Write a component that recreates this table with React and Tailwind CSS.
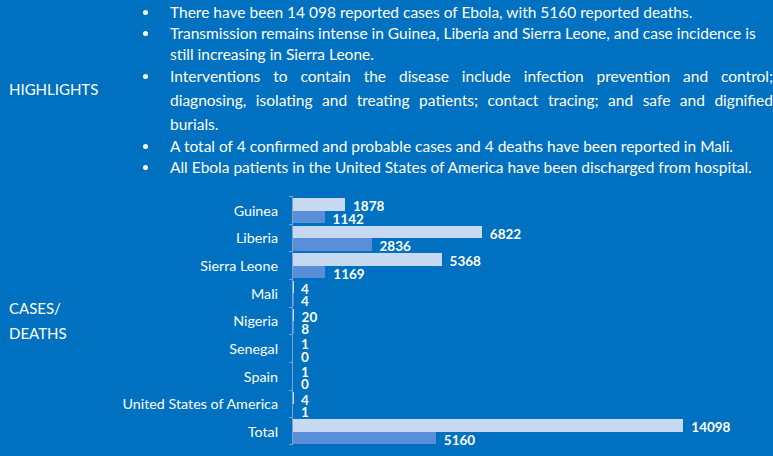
import React from "react";

const rows = [
  { name: "Guinea", cases: 1878, deaths: 1142 },
  { name: "Liberia", cases: 6822, deaths: 2836 },
  { name: "Sierra Leone", cases: 5368, deaths: 1169 },
  { name: "Mali", cases: 4, deaths: 4 },
  { name: "Nigeria", cases: 20, deaths: 8 },
  { name: "Senegal", cases: 1, deaths: 0 },
  { name: "Spain", cases: 1, deaths: 0 },
  { name: "United States of America", cases: 4, deaths: 1 },
  { name: "Total", cases: 14098, deaths: 5160 },
];

// px per reported case
const scale = 390.3 / 14098;

const Dot = () => (
  <div className="flex h-[21px] w-[27px] shrink-0 items-center">
    <div className="h-[5px] w-[5px] rounded-full bg-white"></div>
  </div>
);

const Bar = ({ value, color }) => (
  <div className="flex h-[12.5px] items-center">
    <div className={`h-full ${color}`} style={{ width: value * scale }}></div>
    <span className="ml-[8px] pt-[5px] text-[13.5px] font-bold leading-none">{value}</span>
  </div>
);

const App = () => {
  return (
    <div
      className="flex h-[456px] w-[773px] flex-col overflow-hidden bg-[#0070C0] text-white"
      style={{ fontFamily: "Lato, 'Open Sans', sans-serif" }}
    >
      {/* highlights */}
      <div className="flex">
        <div className="flex w-[143px] shrink-0 items-center pl-[9px] text-[15px] leading-[21px]">
          HIGHLIGHTS
        </div>
        <div className="flex-1 pt-[2px] text-[15.5px] whitespace-nowrap">
          <div className="flex leading-[21px]">
            <Dot />
            <div>There have been 14 098 reported cases of Ebola, with 5160 reported deaths.</div>
          </div>
          <div className="flex leading-[20.5px]">
            <Dot />
            <div>
              <div>Transmission remains intense in Guinea, Liberia and Sierra Leone, and case incidence is</div>
              <div>still increasing in Sierra Leone.</div>
            </div>
          </div>
          <div className="flex leading-[24px]">
            <div className="flex h-[24px] w-[27px] shrink-0 items-center">
              <div className="h-[5px] w-[5px] rounded-full bg-white"></div>
            </div>
            <div className="w-[603px]">
              <div className="text-justify [text-align-last:justify]">
                Interventions to contain the disease include infection prevention and control;
              </div>
              <div className="text-justify [text-align-last:justify]">
                diagnosing, isolating and treating patients; contact tracing; and safe and dignified
              </div>
              <div>burials.</div>
            </div>
          </div>
          <div className="flex leading-[21px]">
            <Dot />
            <div>A total of 4 confirmed and probable cases and 4 deaths have been reported in Mali.</div>
          </div>
          <div className="flex leading-[21px]">
            <Dot />
            <div>All Ebola patients in the United States of America have been discharged from hospital.</div>
          </div>
        </div>
      </div>

      {/* cases / deaths chart */}
      <div className="flex pt-[18px]">
        <div className="flex w-[115px] shrink-0 items-center pl-[9px] pt-[2px] text-[15px] leading-[25px]">
          <div>
            CASES/
            <br />
            DEATHS
          </div>
        </div>
        <div className="flex flex-col">
          {rows.map((r, i) => (
            <div key={r.name} className="flex h-[27.67px]">
              <div className="flex w-[163px] items-center justify-end pt-[2px] text-[14.3px] leading-none whitespace-nowrap">
                {r.name}
              </div>
              <div className="w-[11px]"></div>
              <div
                className={
                  i === rows.length - 1
                    ? "w-[3px] border-t border-b border-[#7da3d2]"
                    : "w-[3px] border-t border-[#7da3d2]"
                }
              ></div>
              <div className="flex flex-col border-l border-[#7da3d2] pt-[2px]">
                <Bar value={r.cases} color="bg-[#c6d9f1]" />
                <Bar value={r.deaths} color="bg-[#598fd8]" />
              </div>
            </div>
          ))}
        </div>
      </div>
    </div>
  );
};

export default App;
